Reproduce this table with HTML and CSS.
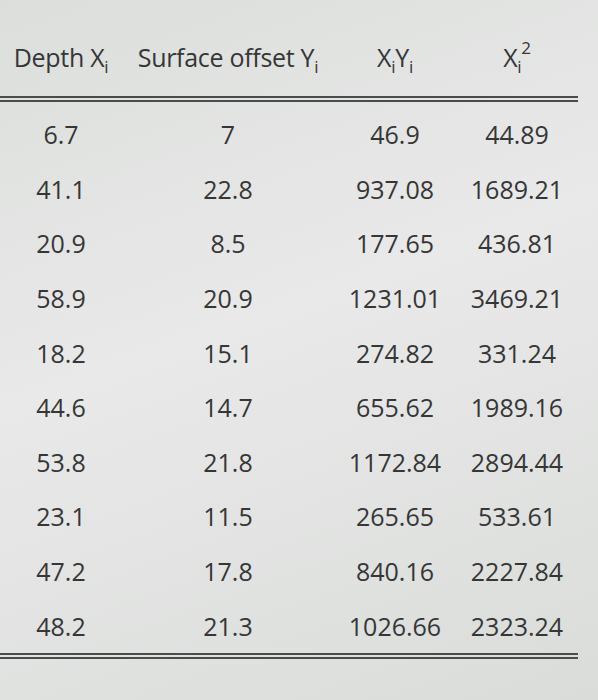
FILE: index.html
```html
<!DOCTYPE html>
<html lang="en">
<head>
    <meta charset="UTF-8">
    <meta name="viewport" content="width=device-width, initial-scale=1.0">
    <title>Depth vs Surface Offset</title>
    <link rel="stylesheet" href="styles.css">
</head>
<body>
    <div class="sheet">
        <div class="table">
            <div class="row head">
                <div class="cell">Depth X<sub>i</sub></div>
                <div class="cell">Surface offset Y<sub>i</sub></div>
                <div class="cell">X<sub>i</sub>Y<sub>i</sub></div>
                <div class="cell">X<sub>i</sub><sup>2</sup></div>
            </div>
            <div class="body">
                <div class="row"><div class="cell">6.7</div><div class="cell">7</div><div class="cell">46.9</div><div class="cell">44.89</div></div>
                <div class="row"><div class="cell">41.1</div><div class="cell">22.8</div><div class="cell">937.08</div><div class="cell">1689.21</div></div>
                <div class="row"><div class="cell">20.9</div><div class="cell">8.5</div><div class="cell">177.65</div><div class="cell">436.81</div></div>
                <div class="row"><div class="cell">58.9</div><div class="cell">20.9</div><div class="cell">1231.01</div><div class="cell">3469.21</div></div>
                <div class="row"><div class="cell">18.2</div><div class="cell">15.1</div><div class="cell">274.82</div><div class="cell">331.24</div></div>
                <div class="row"><div class="cell">44.6</div><div class="cell">14.7</div><div class="cell">655.62</div><div class="cell">1989.16</div></div>
                <div class="row"><div class="cell">53.8</div><div class="cell">21.8</div><div class="cell">1172.84</div><div class="cell">2894.44</div></div>
                <div class="row"><div class="cell">23.1</div><div class="cell">11.5</div><div class="cell">265.65</div><div class="cell">533.61</div></div>
                <div class="row"><div class="cell">47.2</div><div class="cell">17.8</div><div class="cell">840.16</div><div class="cell">2227.84</div></div>
                <div class="row"><div class="cell">48.2</div><div class="cell">21.3</div><div class="cell">1026.66</div><div class="cell">2323.24</div></div>
            </div>
        </div>
    </div>
</body>
</html>
```

FILE: styles.css
```css
body {
    margin: 0;
    font-family: "Open Sans", "Liberation Sans", sans-serif;
    color: #353636;
    background: linear-gradient(160deg, #dcdedc 0%, #e8e9e8 45%, #dadcda 100%);
    height: 700px;
    overflow: hidden;
}
.sheet {
    padding-top: 40px;
}
.table {
    width: 578px;
}
.row {
    display: grid;
    grid-template-columns: 122px 212px 122px 122px;
    text-align: center;
    font-size: 25px;
    height: 54.6px;
    align-items: center;
}
.head {
    font-size: 25px;
    height: 56px;
    align-items: start;
    letter-spacing: -0.3px;
}
.head sub, .head sup {
    font-size: 17px;
    line-height: 0;
}
.head sub {
    vertical-align: -6px;
}
.head sup {
    vertical-align: 13px;
}
.body {
    border-top: 6px double #4a4b4b;
    border-bottom: 6px double #4a4b4b;
    padding-top: 5px;
}
```
